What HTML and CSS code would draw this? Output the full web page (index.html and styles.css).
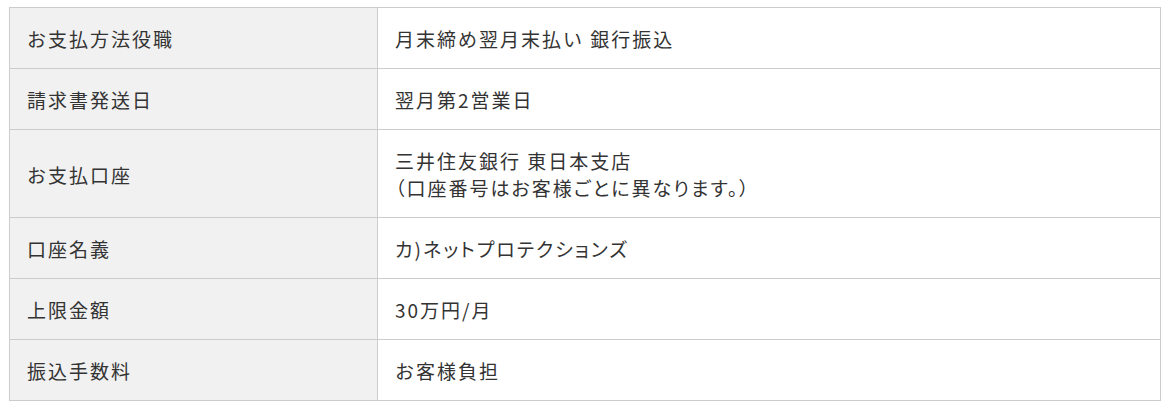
FILE: index.html
```html
<!DOCTYPE html>
<html lang="ja">
<head>
<meta charset="utf-8">
<link rel="stylesheet" href="styles.css">
</head>
<body>
<table class="info">
  <tr><th>お支払方法役職</th><td>月末締め翌月末払い 銀行振込</td></tr>
  <tr><th>請求書発送日</th><td>翌月第2営業日</td></tr>
  <tr><th>お支払口座</th><td>三井住友銀行 東日本支店<br><span class="pal">（口座番号はお客様ごとに異なります。）</span></td></tr>
  <tr><th>口座名義</th><td><span class="pal">カ)ネットプロテクションズ</span></td></tr>
  <tr><th>上限金額</th><td>30万円/月</td></tr>
  <tr><th>振込手数料</th><td>お客様負担</td></tr>
</table>
</body>
</html>
```
FILE: styles.css
```css
html, body { margin: 0; background: #fff; }
body { padding: 7px 0 0 9px; }
.info {
  border-collapse: collapse;
  width: 1152px;
  font-family: "Noto Sans CJK JP", "Noto Sans", sans-serif;
  font-size: 19px;
  line-height: 27px;
  letter-spacing: 2px;
  color: #333;
}
.info th, .info td {
  border: 1px solid #ccc;
  padding: 17px 17px 16px 17px;
  text-align: left;
  vertical-align: middle;
  font-weight: normal;
}
.info th {
  width: 333px;
  background: #f1f1f1;
}
.info td { background: #fff; }
.pal { font-feature-settings: "palt"; }
```
